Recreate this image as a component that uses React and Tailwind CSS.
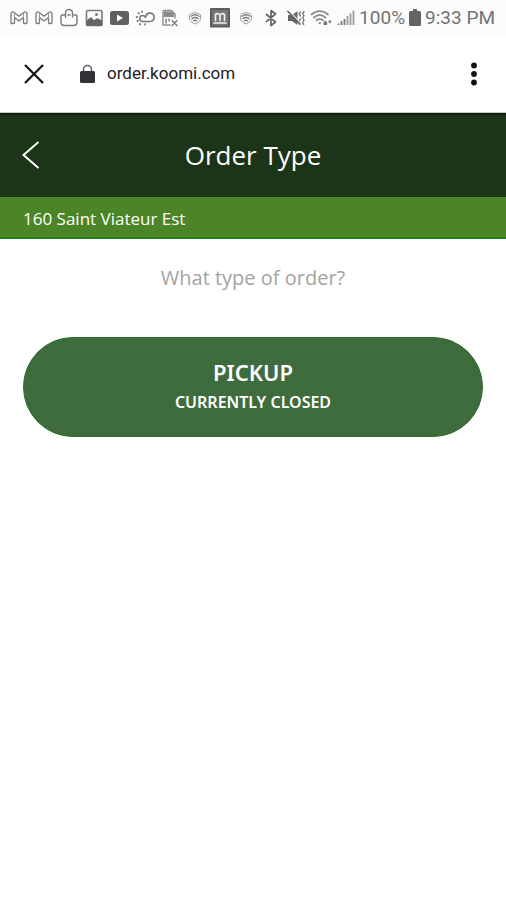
import React from "react";

function Glyph({ children, label, width = 20 }) {
  return (
    <span className="flex flex-1 justify-center" role="img" aria-label={label}>
      <svg
        width={width}
        height="20"
        viewBox={`0 0 ${width} 20`}
        className="shrink-0"
        fill="none"
        stroke="#7a7a7a"
        strokeWidth="1.4"
        strokeLinejoin="round"
        strokeLinecap="round"
      >
        {children}
      </svg>
    </span>
  );
}

function Mail() {
  return (
    <Glyph label="Mail">
      <path d="M2 14.500V5.500c0-1.600 2-2 3.200-1L10 8.200l4.800-3.700c1.200-1 3.200-.6 3.200 1v9q0 1-1 1h-1.500q-1 0-1-1V9.500L10 13 5.500 9.500v5q0 1-1 1H3q-1 0-1-1z" strokeWidth="1.300" />
      <path d="M5.500 5v4.500M14.500 5v4.500" strokeWidth="1" stroke="#999" />
    </Glyph>
  );
}

function Shield() {
  return (
    <Glyph label="Secure connection">
      <path d="M4.500 7c3-3 8-3 11 0v3.500c0 2.500-3 4.500-5.500 5.500-2.500-1-5.500-3-5.500-5.500z" strokeWidth="1" stroke="#999" />
      <path d="M6 8.200c2.500-1.800 5.500-1.800 8 0M7 10.600c2-1.400 4-1.400 6 0M8.500 12.800c1-.7 2-.7 3 0" />
    </Glyph>
  );
}

function StatusBar() {
  return (
    <div className="flex h-9 items-center bg-[#fcfcfc] pr-[11px] pl-1.5 font-[Roboto,sans-serif] text-[19px] text-[#737373]">
      <div className="flex flex-1 items-center">
        <Mail />
        <Mail />
        <Glyph label="Shopping bag">
          <path d="M5.500 7H3.200Q2 7 2 8.200V14q0 3.500 3.500 3.500h9q3.500 0 3.500-3.500V8.200Q18 7 16.800 7H15M6.500 9.500V5a3.500 3.500 0 0 1 7 0v4M9 7h2" />
        </Glyph>
        <Glyph label="Picture">
          <rect x="2.500" y="2.500" width="15.500" height="15" rx="1" strokeWidth="1.600" />
          <path d="M3 13l4-3 3 3 3-2 4.500 2v4H3z" fill="#666" stroke="#666" />
          <circle cx="12.500" cy="6.500" r=".8" fill="#777" />
        </Glyph>
        <Glyph label="Video">
          <rect x="1" y="3" width="19" height="14" rx="2.500" fill="#606060" stroke="none" />
          <path d="M8 6.500l6 3.500-6 3.500z" fill="#fff" stroke="none" />
        </Glyph>
        <Glyph label="Weather">
          <path d="M8 13.500a3 3 0 0 1-.5-6c1.500 0 2.500.8 3 2M9 13.500h6a4.200 4.200 0 1 0-4.200-5.200" strokeWidth="1.600" />
          <path d="M7 3.500v.5M3.500 5l.4.4M1.500 9H2M2.500 13l.4-.4M5 16.500v-.5M10 16.500v-.3" strokeWidth="1.800" />
        </Glyph>
        <Glyph label="SIM card error">
          <path d="M3 17V4q0-1.500 1.500-1.500h7L15 6v4M3 17h7" stroke="#8a8a8a" />
          <path d="M4 3.500h7.500L14 6v3H4z" fill="#8a8a8a" stroke="none" />
          <path d="M6 11v4M9 11v2M12 12.500l5 5M17 12.500l-5 5" />
        </Glyph>
        <Shield />
        <Glyph label="News">
          <rect x="1" y="1" width="18" height="17.500" fill="#777" stroke="#5c5c5c" strokeWidth="2" />
          <path d="M5.500 12.500V6M10 12.500V6.500M14.500 12.500V6.500M5.500 6.500Q7.500 4.500 10 7M10 7q2.500-2.500 4.500-.5M4 15h12" stroke="#f2f2f2" strokeWidth="1.600" />
        </Glyph>
        <Shield />
        <Glyph label="Bluetooth">
          <path d="M5.500 6.500l9 7.500-4.500 3.500v-15l4.500 3.500-9 7.500" strokeWidth="1.700" stroke="#666" />
        </Glyph>
        <Glyph label="Muted, vibrate">
          <path d="M2 7h4l5.500-4v14L6 13H2z" fill="#666" stroke="none" />
          <path d="M3 3l12 12.500" stroke="#fcfcfc" strokeWidth="1.200" />
          <path d="M2 3.500L14 16" stroke="#666" strokeWidth="1.800" />
          <path d="M14.500 4l-1.300 2 1.300 2M14.500 11l-1 1.500M18 3.500l-1.300 2 1.300 2.200-1.300 2.300 1.300 2.200-1.300 2.300 1 2" />
        </Glyph>
        <Glyph label="Wi-Fi" width={22}>
          <path d="M1.500 6.500c5-4.500 11.500-4.500 16.500 0M4 9.500c3.500-3 8-3 11.500 0M6.500 12.300c2-1.600 4.500-1.600 6.500 0" stroke="#8c8c8c" strokeWidth="1.800" />
          <path d="M8 14.500h3.500l-1.700 2z" fill="#777" stroke="none" />
          <path d="M13.500 14.500l1.800-2 1.800 2v2.500h-3.600zM18.500 12.500h2.800v1.500l-1.400 1.500-1.400-1.500z" fill="#777" stroke="none" />
        </Glyph>
        <Glyph label="Mobile signal">
          <path d="M2.500 15.500V17M5.500 13v4M8.500 11v6" stroke="#777" strokeWidth="1.800" strokeLinecap="butt" />
          <path d="M11.500 8v9M14.500 5.500V17M17.500 2.500V17" stroke="#9c9c9c" strokeWidth="1.800" strokeLinecap="butt" />
        </Glyph>
      </div>
      <span>100%</span>
      <svg width="12" height="18" viewBox="0 0 12 18" className="mx-1 shrink-0" role="img" aria-label="Battery full">
        <path d="M4 0h4v2h2.500Q12 2 12 3.500v12q0 1.500-1.500 1.500h-9Q0 17 0 15.500v-12Q0 2 1.500 2H4z" fill="#636363" />
      </svg>
      <span>9:33 PM</span>
    </div>
  );
}

function BrowserBar() {
  return (
    <div className="flex h-[77px] items-center border-b border-[#c9c9c9] bg-white px-[22px] text-[#202124]">
      <button type="button" aria-label="Close" className="flex w-6 justify-center">
        <svg width="20" height="20" viewBox="0 0 20 20" fill="none" stroke="#111" strokeWidth="2.200">
          <path d="M1 1l18 18M19 1L1 19" />
        </svg>
      </button>
      <svg width="15" height="20" viewBox="0 0 15 20" className="ml-[34px] shrink-0" role="img" aria-label="Secure">
        <path d="M3.500 8V5.500a4 4 0 0 1 8 0V8" fill="none" stroke="#666" strokeWidth="1.600" />
        <rect y="7" width="15" height="12" rx="1.500" fill="#2f3136" />
      </svg>
      <span className="ml-3 flex-1 font-[Roboto,sans-serif] text-[17px]">order.koomi.com</span>
      <button type="button" aria-label="More options" className="flex w-5 justify-center">
        <svg width="6" height="24" viewBox="0 0 6 24" fill="#111">
          <circle cx="3" cy="3.500" r="2.900" />
          <circle cx="3" cy="12" r="2.900" />
          <circle cx="3" cy="20.500" r="2.900" />
        </svg>
      </button>
    </div>
  );
}

export default function App() {
  return (
    <div className="min-h-screen bg-white font-['Open_Sans','Noto_Sans',sans-serif]">
      <StatusBar />
      <BrowserBar />
      <header className="grid h-[84px] grid-cols-[1fr_auto_1fr] items-center border-t-2 border-[#10200e] bg-[#1c3417] px-[22px] pb-0.5 text-white">
        <button type="button" aria-label="Back" className="flex justify-self-start">
          <svg width="18" height="28" viewBox="0 0 18 28" fill="none" stroke="#fff" strokeWidth="2">
            <path d="M16.500 1L1.500 14l15 13" />
          </svg>
        </button>
        <h1 className="text-[26px] leading-8">Order Type</h1>
      </header>
      <div className="flex h-[42px] items-center border-b-2 border-[#23811a] bg-[#4c8527] px-[23px] pt-1 text-[17px] text-white">
        160 Saint Viateur Est
      </div>
      <main className="px-[23px] pt-[25px]">
        <h2 className="text-center text-[20px] leading-7 text-[#a3a3a3]">What type of order?</h2>
        <button
          type="button"
          className="mt-[45px] flex w-full flex-col items-center rounded-full border border-[#2f6a2c] bg-[#3f6c3c] pt-[18px] pb-5 font-['Noto_Sans',sans-serif] text-white"
        >
          <span className="text-[22px] leading-8 font-semibold">PICKUP</span>
          <span className="text-[16px] leading-7 font-semibold">CURRENTLY CLOSED</span>
        </button>
      </main>
    </div>
  );
}
